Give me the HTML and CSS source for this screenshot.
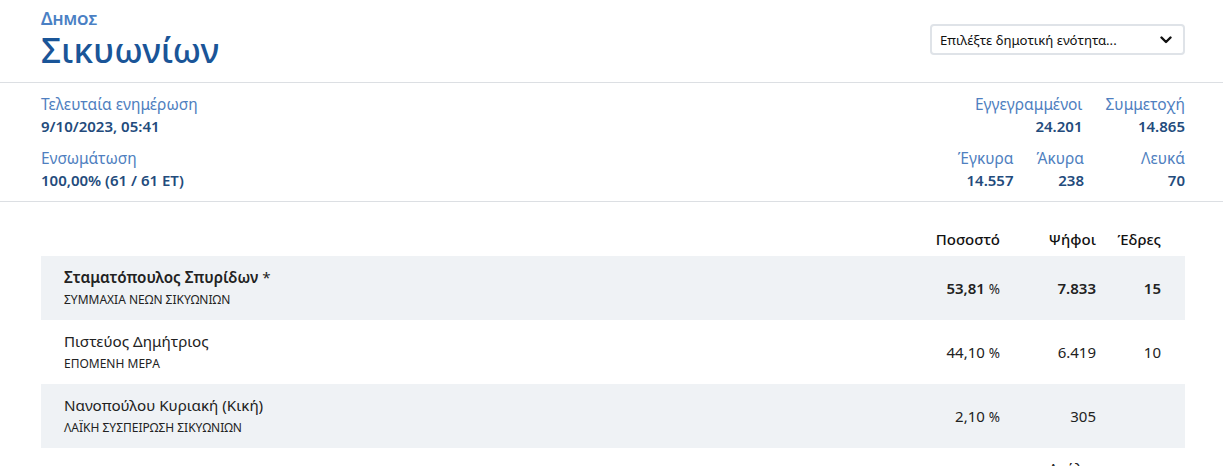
FILE: index.html
```html
<!DOCTYPE html>
<html lang="el">
<head>
<meta charset="utf-8">
<title>Δήμος Σικυωνίων</title>
<link rel="stylesheet" href="styles.css">
</head>
<body>
<header class="header">
  <div class="header-inner">
    <div class="titles">
      <div class="kicker">Δημος</div>
      <h1 class="title">Σικυωνίων</h1>
    </div>
    <div class="select">
      <span class="select-text">Επιλέξτε δημοτική ενότητα...</span>
      <svg class="chev" width="12" height="8" viewBox="0 0 12 8"><path d="M1.5 1.5 L6 6 L10.5 1.5" fill="none" stroke="#111" stroke-width="2.4" stroke-linecap="round" stroke-linejoin="round"/></svg>
    </div>
  </div>
</header>

<section class="info">
  <div class="info-inner">
    <div class="info-left">
      <div class="stat">
        <div class="label">Τελευταία ενημέρωση</div>
        <div class="value">9/10/2023, 05:41</div>
      </div>
      <div class="stat">
        <div class="label">Ενσωμάτωση</div>
        <div class="value">100,00% (61 / 61 ΕΤ)</div>
      </div>
    </div>
    <div class="info-right">
      <div class="stat-row">
        <div class="stat r">
          <div class="label">Εγγεγραμμένοι</div>
          <div class="value">24.201</div>
        </div>
        <div class="stat r last">
          <div class="label">Συμμετοχή</div>
          <div class="value">14.865</div>
        </div>
      </div>
      <div class="stat-row">
        <div class="stat r">
          <div class="label">Έγκυρα</div>
          <div class="value">14.557</div>
        </div>
        <div class="stat r">
          <div class="label">Άκυρα</div>
          <div class="value">238</div>
        </div>
        <div class="stat r last">
          <div class="label">Λευκά</div>
          <div class="value">70</div>
        </div>
      </div>
    </div>
  </div>
</section>

<section class="results">
  <div class="row head">
    <div></div>
    <div class="num">Ποσοστό</div>
    <div class="num">Ψήφοι</div>
    <div class="num">Έδρες</div>
  </div>
  <div class="row shaded winner">
    <div class="cand">
      <div class="name">Σταματόπουλος Σπυρίδων <span class="star">*</span></div>
      <div class="party">ΣΥΜΜΑΧΙΑ ΝΕΩΝ ΣΙΚΥΩΝΙΩΝ</div>
    </div>
    <div class="num">53,81 <span class="pct">%</span></div>
    <div class="num">7.833</div>
    <div class="num">15</div>
  </div>
  <div class="row">
    <div class="cand">
      <div class="name">Πιστεύος Δημήτριος</div>
      <div class="party">ΕΠΟΜΕΝΗ ΜΕΡΑ</div>
    </div>
    <div class="num">44,10 <span class="pct">%</span></div>
    <div class="num">6.419</div>
    <div class="num">10</div>
  </div>
  <div class="row shaded">
    <div class="cand">
      <div class="name">Νανοπούλου Κυριακή (Κική)</div>
      <div class="party">ΛΑΪΚΗ ΣΥΣΠΕΙΡΩΣΗ ΣΙΚΥΩΝΙΩΝ</div>
    </div>
    <div class="num">2,10 <span class="pct">%</span></div>
    <div class="num">305</div>
    <div class="num"></div>
  </div>
  <div class="more">Ανάλυση</div>
</section>
</body>
</html>
```

FILE: styles.css
```css
* { box-sizing: border-box; }
html, body { margin: 0; padding: 0; background: #fff; }
body {
  font-family: "Noto Sans", "Open Sans", sans-serif;
  font-size: 15px;
  color: #222;
  overflow: hidden;
}

.header { border-bottom: 1px solid #dcdfe3; }
.header-inner {
  display: flex;
  justify-content: space-between;
  align-items: flex-start;
  padding: 8px 38px 0 41px;
  height: 82px;
}
.kicker {
  font-variant: small-caps;
  font-weight: 600;
  font-size: 17.5px;
  line-height: 20px;
  color: #4a80c4;
}
.title {
  margin: 2px 0 0;
  font-weight: 500;
  font-size: 35px;
  line-height: 40px;
  color: #1a5598;
}
.select {
  margin-top: 16px;
  width: 255px;
  height: 31px;
  border: 2px solid #dfe3e8;
  border-radius: 4px;
  display: flex;
  align-items: center;
  justify-content: space-between;
  padding: 0 11px 0 8px;
  font-size: 13.2px;
  color: #111;
}

.info { border-bottom: 1px solid #dcdfe3; }
.info-inner {
  display: flex;
  justify-content: space-between;
  padding: 10px 38px 10px 41px;
  height: 118px;
}
.info-left, .info-right { display: flex; flex-direction: column; gap: 10px; }
.stat-row { display: flex; justify-content: flex-end; gap: 23px; }
.stat.r { text-align: right; }
.stat.last { min-width: 78px; }
.label { font-size: 15.5px; line-height: 22px; color: #4f7fc0; }
.value { font-size: 15px; line-height: 22px; font-weight: 600; color: #234b7c; }

.results { padding: 20px 38px 0 41px; }
.row {
  display: grid;
  grid-template-columns: 1fr 120px 96px 65px;
  align-items: center;
  padding: 0 24px 0 23px;
  height: 64px;
}
.row.head { height: 34px; font-weight: 500; color: #111; }
.row.shaded { background: #eff2f5; }
.num { text-align: right; }
.name { font-size: 15.2px; line-height: 24px; color: #222; }
.party { font-size: 12px; line-height: 22px; color: #222; }
.winner .name, .winner .num { font-weight: 600; }
.winner .pct { font-weight: 400; }
.pct { font-size: 13.5px; }
.star { font-weight: 400; }
.more {
  margin-top: 10px;
  padding-right: 75px;
  text-align: right;
  font-size: 15px;
  color: #222;
}
```
